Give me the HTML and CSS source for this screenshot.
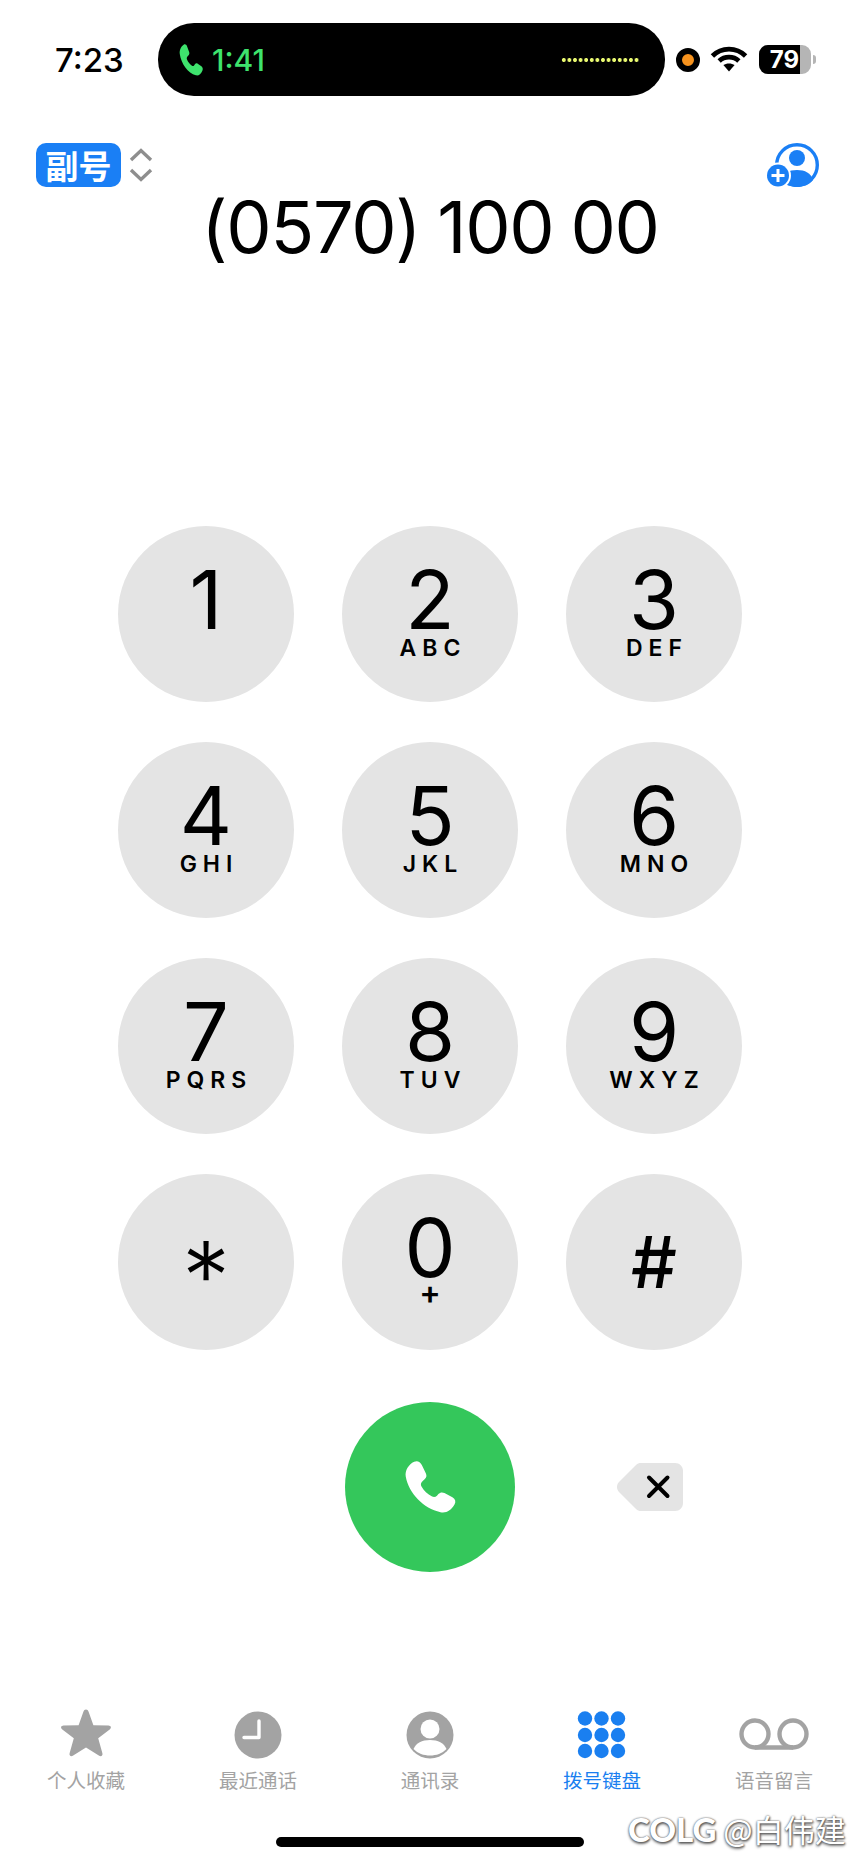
FILE: index.html
```html
<!DOCTYPE html>
<html>
  <head>
    <meta charset="UTF-8" />
    <title>拨号键盘</title>
    <link rel="stylesheet" href="styles.css">
  </head>
  <body>
    <svg class="defs" width="0" height="0">
      <symbol id="handset" viewBox="0 0 24 24" preserveAspectRatio="none">
        <path d="M5.2 1.2C6.6 0.6 7.8 1.2 8.5 2.6L10.2 6.1C10.7 7.1 10.5 7.9 9.8 8.6L8.9 9.4C8.1 10.1 7.9 10.9 8.3 11.7C9.4 13.6 10.9 15.1 12.9 16.1C13.7 16.5 14.4 16.3 15 15.7L15.6 15C16.3 14.3 17.2 14.1 18.2 14.6L21.6 16.4C22.9 17.2 23.2 18.3 22.5 19.5C21.1 22 19 23.3 16.5 22.8C9.2 21.2 2.9 14.7 1.6 7.5C1.2 5 2.9 2.2 5.2 1.2Z"/>
      </symbol>
    </svg>
    <div class="phone">
      <header class="status">
        <span class="time">7:23</span>
        <div class="island">
          <svg class="island-phone"><use href="#handset"/></svg>
          <span class="island-time">1:41</span>
          <span class="island-dots"></span>
        </div>
        <span class="mic-dot"></span>
        <svg class="wifi" viewBox="0 0 36 27">
          <path d="M18 5C24.6 5 30 7.6 34 11.6" />
          <path d="M18 5C11.4 5 6 7.6 2 11.6" />
          <path d="M8.5 16.3C11 14 14.2 12.7 18 12.7S25 14 27.5 16.3" />
          <path class="wifi-tip" d="M12.6 20.3C14 19.3 16 18.7 18 18.7S22 19.3 23.4 20.3L18 26.5Z" />
        </svg>
        <div class="battery">
          <div class="battery-body"><span class="battery-fill">79</span></div>
          <span class="battery-nub"></span>
        </div>
      </header>

      <div class="dial-top">
        <div class="sim-select">
          <span class="sim-badge">副号</span>
          <svg class="sim-chevrons" viewBox="0 0 24 34">
            <path d="M2 12L12 2.5L22 12" />
            <path d="M2 22L12 31.5L22 22" />
          </svg>
        </div>
        <svg class="add-contact" viewBox="0 0 52 46">
          <circle class="ring" cx="30" cy="23" r="20.3" />
          <circle cx="30" cy="16" r="8" />
          <path d="M14 38C16 31 22 28 30 28S44 31 46 38C42 43 36 45 30 45S18 43 14 38Z" />
          <circle class="badge-gap" cx="11" cy="33.5" r="13" />
          <circle cx="11" cy="33.5" r="11" />
          <path class="plus" d="M11 27V40M4.500 33.5H17.500" />
        </svg>
      </div>
      <div class="number">(0570) 100 00</div>

      <div class="keypad">
        <div class="key"><span class="digit">1</span></div>
        <div class="key"><span class="digit">2</span><span class="letters">ABC</span></div>
        <div class="key"><span class="digit">3</span><span class="letters">DEF</span></div>
        <div class="key"><span class="digit">4</span><span class="letters">GHI</span></div>
        <div class="key"><span class="digit">5</span><span class="letters">JKL</span></div>
        <div class="key"><span class="digit">6</span><span class="letters">MNO</span></div>
        <div class="key"><span class="digit">7</span><span class="letters">PQRS</span></div>
        <div class="key"><span class="digit">8</span><span class="letters">TUV</span></div>
        <div class="key"><span class="digit">9</span><span class="letters">WXYZ</span></div>
        <div class="key"><span class="digit star">*</span></div>
        <div class="key"><span class="digit">0</span><span class="letters plus-sign">+</span></div>
        <div class="key"><span class="digit hash">#</span></div>
      </div>

      <div class="actions">
        <div class="call">
          <svg class="call-icon"><use href="#handset"/></svg>
        </div>
        <svg class="delete" viewBox="0 0 66 48">
          <path class="delete-body" d="M24 0H58C62.5 0 66 3.5 66 8V40C66 44.5 62.5 48 58 48H24C21.8 48 20.6 47.4 19 46L2 29C-0.7 26.3 -0.7 21.7 2 19L19 2C20.6 0.6 21.8 0 24 0Z" />
          <path class="delete-x" d="M32 14.500L50.500 33M50.500 14.500L32 33" />
        </svg>
      </div>

      <nav class="tabs">
        <div class="tab">
          <svg class="tab-icon" viewBox="0 0 52 52">
            <path d="M26 1.5C27.3 1.5 28 2.3 28.6 3.8L33.4 17.2L48.5 17.6C50.9 17.7 51.7 19.8 50 21.2L38.2 30.3L42.4 45.3C43 47.6 41.2 49 39.2 47.8L26 39.4L12.8 47.8C10.8 49 9 47.6 9.6 45.3L13.8 30.3L2 21.2C0.3 19.8 1.1 17.7 3.5 17.6L18.6 17.2L23.4 3.8C24 2.3 24.7 1.5 26 1.5Z" />
          </svg>
          <span>个人收藏</span>
        </div>
        <div class="tab">
          <svg class="tab-icon" viewBox="0 0 52 52">
            <circle cx="26" cy="27" r="23.5" />
            <path class="clock-hands" d="M27 13V29.5H12" />
          </svg>
          <span>最近通话</span>
        </div>
        <div class="tab">
          <svg class="tab-icon" viewBox="0 0 52 52">
            <circle cx="26" cy="27" r="23.5" />
            <circle class="cut" cx="26" cy="21" r="9.5" />
            <path class="cut" d="M9.5 41C12 35 18 32 26 32S40 35 42.500 41C38 45.500 32.500 47.500 26 47.500S14 45.500 9.5 41Z" />
          </svg>
          <span>通讯录</span>
        </div>
        <div class="tab tab-active">
          <svg class="tab-icon" viewBox="0 0 52 52">
            <circle cx="9" cy="10.500" r="7.2" /><circle cx="25.500" cy="10.500" r="7.2" /><circle cx="42" cy="10.500" r="7.2" />
            <circle cx="9" cy="27" r="7.2" /><circle cx="25.500" cy="27" r="7.2" /><circle cx="42" cy="27" r="7.2" />
            <circle cx="9" cy="43" r="7.2" /><circle cx="25.500" cy="43" r="7.2" /><circle cx="42" cy="43" r="7.2" />
          </svg>
          <span>拨号键盘</span>
        </div>
        <div class="tab">
          <svg class="tab-icon tab-voicemail" viewBox="0 0 70 52">
            <circle cx="16" cy="26" r="13.5" />
            <circle cx="54" cy="26" r="13.5" />
            <path d="M16 39.5H54" />
          </svg>
          <span>语音留言</span>
        </div>
      </nav>

      <div class="home-bar"></div>
      <div class="watermark"><span class="wm-logo">COLG</span> @白伟建</div>
    </div>
  </body>
</html>
```

FILE: styles.css
```css
body {
  margin: 0;
  background-color: #ffffff;
  font-family: Inter, "Noto Sans CJK SC", sans-serif;
  color: #000000;
}
.defs {
  display: block;
  height: 0;
}
.phone {
  position: relative;
  width: 860px;
  height: 1864px;
  overflow: hidden;
  display: flex;
  flex-direction: column;
}

/* status bar */
.status {
  display: flex;
  align-items: center;
  height: 73px;
  margin-top: 23px;
}
.time {
  width: 69px;
  margin-left: 55px;
  margin-right: 34px;
  font-size: 33px;
  font-weight: 500;
  white-space: nowrap;
}
.island {
  width: 507px;
  height: 73px;
  border-radius: 36px;
  background-color: #000000;
  display: flex;
  align-items: center;
  box-sizing: border-box;
  padding-left: 20px;
}
.island-phone {
  width: 26px;
  height: 34px;
  fill: #3ee36d;
}
.island-time {
  margin-left: 8px;
  font-size: 30px;
  font-weight: 500;
  color: #3ee36d;
}
.island-dots {
  width: 78px;
  height: 6px;
  margin-left: auto;
  margin-right: 26px;
  background-image: radial-gradient(circle, #e8f870 1.8px, transparent 2.2px);
  background-size: 5.6px 6px;
}
.mic-dot {
  width: 12px;
  height: 12px;
  margin-left: 11px;
  border: 6px solid #000000;
  border-radius: 50%;
  background-color: #f7931e;
}
.wifi {
  width: 38px;
  height: 28px;
  margin-left: 10px;
  margin-top: -3px;
  fill: none;
  stroke: #000000;
  stroke-width: 4.6px;
}
.wifi-tip {
  fill: #000000;
  stroke: none;
}
.battery {
  display: flex;
  align-items: center;
  margin-left: 11px;
}
.battery-body {
  width: 52px;
  height: 29px;
  border-radius: 9px;
  overflow: hidden;
  background-color: #b5b5b5;
}
.battery-fill {
  display: block;
  width: 41px;
  height: 29px;
  background-color: #000000;
  color: #ffffff;
  font-size: 24px;
  font-weight: 700;
  line-height: 29px;
  text-align: right;
  box-sizing: border-box;
  padding-right: 1px;
}
.battery-nub {
  width: 3px;
  height: 9px;
  margin-left: 2px;
  border-radius: 0 3px 3px 0;
  background-color: #b5b5b5;
}

/* selector and number */
.dial-top {
  display: flex;
  justify-content: space-between;
  align-items: center;
  height: 45px;
  margin-top: 46px;
  padding: 0 41px 0 36px;
}
.sim-select {
  display: flex;
  align-items: center;
  gap: 8px;
}
.sim-badge {
  width: 85px;
  height: 44px;
  border-radius: 10px;
  background-color: #1a7ff5;
  color: #ffffff;
  font-family: "Noto Sans CJK SC", sans-serif;
  font-size: 33px;
  font-weight: 700;
  line-height: 44px;
  text-align: center;
}
.sim-chevrons {
  width: 24px;
  height: 34px;
  fill: none;
  stroke: #8e8e8e;
  stroke-width: 3.4px;
}
.add-contact {
  width: 52px;
  height: 46px;
  fill: #1a7ff5;
}
.add-contact .ring {
  fill: none;
  stroke: #1a7ff5;
  stroke-width: 3.4px;
}
.add-contact .badge-gap {
  fill: #ffffff;
}
.add-contact .plus {
  fill: none;
  stroke: #ffffff;
  stroke-width: 3px;
}
.number {
  margin-top: 4px;
  font-size: 72px;
  font-weight: 400;
  line-height: 72px;
  letter-spacing: -1.3px;
  word-spacing: -2px;
  text-align: center;
}

/* keypad */
.keypad,
.actions {
  display: grid;
  grid-template-columns: repeat(3, 176px);
  column-gap: 48px;
  justify-content: center;
}
.keypad {
  row-gap: 40px;
  margin-top: 263px;
}
.key {
  width: 176px;
  height: 176px;
  border-radius: 50%;
  background-color: #e4e4e4;
  display: flex;
  flex-direction: column;
  align-items: center;
  box-sizing: border-box;
  padding-top: 44px;
}
.digit {
  font-size: 81px;
  font-weight: 400;
  line-height: 60px;
  height: 60px;
}
.letters {
  margin-top: 6px;
  padding-left: 6px;
  font-size: 23px;
  font-weight: 600;
  line-height: 24px;
  letter-spacing: 6px;
}
.plus-sign {
  margin-top: 3px;
  font-size: 32px;
  letter-spacing: 0;
  padding-left: 0;
}
.star {
  margin-top: 28px;
  font-size: 96px;
  font-weight: 350;
}
.hash {
  margin-top: 14px;
  font-size: 72px;
  font-weight: 500;
}
.actions {
  margin-top: 52px;
  align-items: center;
}
.call {
  grid-column: 2;
  justify-self: center;
  width: 170px;
  height: 170px;
  border-radius: 50%;
  background-color: #34c75b;
  display: flex;
  align-items: center;
  justify-content: center;
}
.call-icon {
  width: 56px;
  height: 56px;
  fill: #ffffff;
}
.delete {
  grid-column: 3;
  width: 66px;
  height: 48px;
  margin-left: 51px;
}
.delete-body {
  fill: #e4e4e4;
}
.delete-x {
  fill: none;
  stroke: #000000;
  stroke-width: 4px;
  stroke-linecap: round;
}

/* tab bar */
.tabs {
  display: grid;
  grid-template-columns: repeat(5, 172px);
  margin-top: 136px;
}
.tab {
  display: flex;
  flex-direction: column;
  align-items: center;
  gap: 6px;
  color: #a3a3a3;
  font-family: "Noto Sans CJK SC", sans-serif;
  font-size: 19.5px;
  line-height: 28px;
}
.tab-icon {
  width: 52px;
  height: 52px;
  fill: #a3a3a3;
}
.clock-hands {
  fill: none;
  stroke: #ffffff;
  stroke-width: 3.4px;
  stroke-linejoin: round;
  stroke-linecap: round;
}
.cut {
  fill: #ffffff;
}
.tab-voicemail {
  width: 70px;
  fill: none;
  stroke: #a3a3a3;
  stroke-width: 4.4px;
}
.tab-active {
  color: #1a7ff0;
}
.tab-active .tab-icon {
  fill: #1a7ff0;
}
.home-bar {
  width: 308px;
  height: 10px;
  margin: 43px auto 0;
  border-radius: 5px;
  background-color: #000000;
}

/* overlay in the corner of the image */
.watermark {
  position: absolute;
  left: 628px;
  top: 1808px;
  color: #ffffff;
  font-family: "Noto Sans CJK SC", sans-serif;
  font-size: 31px;
  line-height: 42px;
  white-space: nowrap;
  text-shadow: 0 0 2px #555555, 1px 1px 2px #666666, 0 2px 3px #888888;
}
.wm-logo {
  font-family: Lato, sans-serif;
  font-weight: 900;
  font-size: 33px;
}
```
